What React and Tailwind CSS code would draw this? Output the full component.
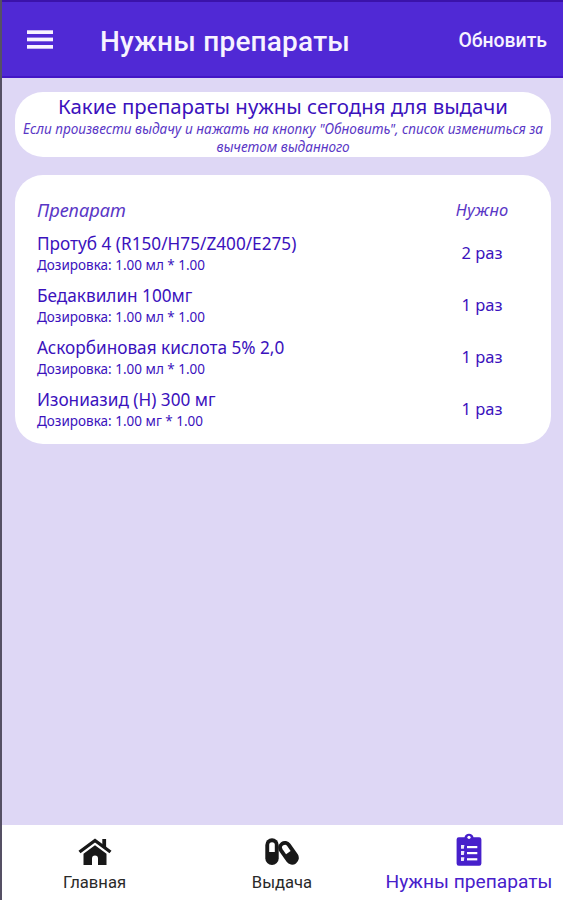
const MEDICINES = [
  { name: 'Протуб 4 (R150/H75/Z400/E275)', dose: '1.00 мл * 1.00', count: 2 },
  { name: 'Бедаквилин 100мг', dose: '1.00 мл * 1.00', count: 1 },
  { name: 'Аскорбиновая кислота 5% 2,0', dose: '1.00 мл * 1.00', count: 1 },
  { name: 'Изониазид (H) 300 мг', dose: '1.00 мг * 1.00', count: 1 },
];

function MenuIcon() {
  return (
    <svg width="26" height="19" viewBox="0 0 26 19" fill="currentColor">
      <rect y="0.3" width="26" height="3.7" />
      <rect y="7.6" width="26" height="3.7" />
      <rect y="15" width="26" height="3.7" />
    </svg>
  );
}

function HomeIcon() {
  return (
    <svg width="34" height="28" viewBox="0 0 34 28" fill="#181818">
      <path d="M1.500 14L17 2.500 32.500 14" fill="none" stroke="#181818" strokeWidth="3.400" />
      <path d="M24.300 1h3.800V11l-3.800-2.700z" />
      <path d="M5.500 15.800L17 7.200l11.500 8.600V27H20v-6.500a3 3 0 0 0-6 0V27H5.500z" />
    </svg>
  );
}

function CapsulesIcon() {
  return (
    <svg width="34" height="28" viewBox="0 0 34 28">
      <rect x="0.3" y="0.2" width="13.4" height="26.8" rx="6.700" fill="#181818" />
      <path d="M4.200 14V7a2.800 2.800 0 0 1 5.600 0v7z" fill="#fff" />
      <g transform="rotate(-35 23.5 14.800)">
        <rect x="16.800" y="1.8" width="13.400" height="26" rx="6.700" fill="#181818" />
        <path d="M20.700 14.500V8.500a2.800 2.800 0 0 1 5.600 0v6z" fill="#fff" />
      </g>
    </svg>
  );
}

function ClipboardIcon() {
  return (
    <svg width="26" height="34" viewBox="0 0 26 34">
      <path
        d="M2.800 4.300H8.500a4.600 4.600 0 0 1 9 0h5.700A2.200 2.200 0 0 1 25.400 6.500v24a2.200 2.200 0 0 1-2.200 2.200H2.800A2.200 2.200 0 0 1 .6 30.500v-24A2.200 2.200 0 0 1 2.800 4.300z"
        fill="#4720cb"
      />
      <circle cx="13" cy="4.300" r="1.600" fill="#fff" />
      <g fill="#fff">
        <rect x="11" y="13" width="10.300" height="2.200" />
        <rect x="11" y="19" width="10.300" height="2.200" />
        <rect x="11" y="25.200" width="10.300" height="2.200" />
      </g>
      {/* отметки слева от строк */}
      <g fill="#ece7fa">
        <path d="M5 12h3.400l-.6 3.800H5z" />
        <path d="M5 18.100h3.400l-.6 3.800H5z" />
        <path d="M5 24.300h3.400l-.6 3.800H5z" />
      </g>
    </svg>
  );
}

export default function App() {
  return (
    <div className="flex h-[900px] w-[563px] flex-col overflow-hidden border-l-2 border-[#555064] bg-[#ded7f5] font-['Noto_Sans',sans-serif] text-[#3b12bd]">
      <header className="-ml-0.5 flex h-[78px] shrink-0 items-center border-t-2 border-b-2 border-l-2 border-t-[#3b12aa] border-b-[#4316c6] border-l-[#32138c] bg-[#5029d5] pr-4 pl-[25px] font-[Roboto,sans-serif] font-medium text-[#f7f3ff]">
        <button className="pt-px" aria-label="Меню"><MenuIcon /></button>
        <h1 className="ml-[47px] pt-1.5 text-[28px] leading-8 tracking-[0.22px] whitespace-nowrap">Нужны препараты</h1>
        <button className="ml-auto pt-1 text-[19.4px] leading-6 whitespace-nowrap">Обновить</button>
      </header>

      <main className="flex flex-1 flex-col gap-[18px] pt-[14px] pr-3 pl-[13px]">
        <section className="h-[65px] rounded-[28px] bg-white text-center">
          <h2 className="text-[20.4px] leading-7 whitespace-nowrap">Какие препараты нужны сегодня для выдачи</h2>
          <p className="text-[13.6px] leading-[18px] text-[#5a37c6] italic">
            <span className="-mx-2 block whitespace-nowrap">Если произвести выдачу и нажать на кнопку "Обновить", список измениться за</span>
            <span className="block">вычетом выданного</span>
          </p>
        </section>

        <section className="h-[269px] rounded-[28px] bg-white pt-[22px] pr-[21px] pl-[22px]">
          <div className="flex h-[34px] items-start text-[#5a37c6] italic">
            <span className="flex-1 text-[18.3px] leading-[26px]">Препарат</span>
            <span className="w-24 text-center text-[16.5px] leading-[26px]">Нужно</span>
          </div>
          {MEDICINES.map((m) => (
            <div key={m.name} className="flex h-[52px] items-start">
              <div className="flex-1 whitespace-nowrap">
                <p className="text-[17.2px] leading-[25px]">{m.name}</p>
                <p className="text-[13.5px] leading-[19px]">Дозировка: {m.dose}</p>
              </div>
              <span className="w-24 pt-[10px] text-center text-[16.5px] leading-6">{m.count} раз</span>
            </div>
          ))}
        </section>
      </main>

      <nav className="flex h-[75px] shrink-0 bg-white font-[Roboto,sans-serif] text-[#292929]">
        <a className="flex w-[185px] flex-col items-center pt-[13px]">
          <HomeIcon />
          <span className="pt-1 text-[16.6px] leading-[26px]">Главная</span>
        </a>
        <a className="flex w-[190px] flex-col items-center pt-[13px]">
          <CapsulesIcon />
          <span className="pt-1 text-[16.6px] leading-[26px]">Выдача</span>
        </a>
        <a className="flex w-[184px] flex-col items-center pt-2 text-[#4720cb]">
          <ClipboardIcon />
          <span className="pt-0.5 text-[19.2px] leading-[26px] whitespace-nowrap">Нужны препараты</span>
        </a>
      </nav>
    </div>
  );
}
